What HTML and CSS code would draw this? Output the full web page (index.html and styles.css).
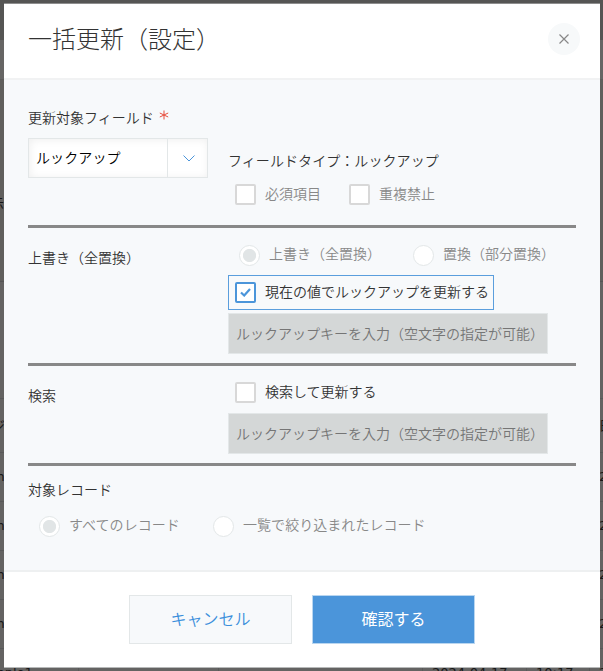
FILE: index.html
```html
<!DOCTYPE html>
<html lang="ja">
<head>
<meta charset="utf-8">
<title>一括更新（設定）</title>
<link rel="stylesheet" href="styles.css">
</head>
<body>
<div class="page">
  <div class="bar bar-top"></div>
  <div class="bar bar-nav"></div>
  <div class="bar bar-tools"><span class="edge-text">示</span></div>
  <div class="bar bar-space"></div>
  <div class="row head"><span class="name">ジ</span><span></span><span></span><span></span><span></span><span>日</span></div>
  <div class="row"><span class="name">m</span><span></span><span></span><span></span><span></span><span>2</span></div>
  <div class="row"><span class="name">m</span><span></span><span></span><span></span><span></span><span>2</span></div>
  <div class="row"><span class="name">m</span><span></span><span></span><span></span><span></span><span>2</span></div>
  <div class="row"><span class="name">m</span><span></span><span></span><span></span><span></span><span>2</span></div>
  <div class="row"><span class="name">mple1</span><span></span><span></span><span>2024-04-17</span><span>10:17</span><span>2</span></div>
</div>

<div class="modal" role="dialog">
  <header class="modal-head">
    <h1>一括更新（設定）</h1>
    <button class="close" aria-label="閉じる"><svg width="10" height="10" viewBox="0 0 10 10"><path d="M.5 .5L9.5 9.5M9.5 .5L.5 9.5"/></svg></button>
  </header>

  <main class="modal-body">
    <section class="section field">
      <div>
        <div class="label">更新対象フィールド<svg class="required" width="10" height="10" viewBox="0 0 10 10"><path d="M5 .5V9.5M.8 3L9.2 7M9.2 3L.8 7"/></svg></div>
        <div class="select"><span>ルックアップ</span><i><svg width="12" height="7" viewBox="0 0 12 7"><path d="M.5 .5L6 6L11.5 .5"/></svg></i></div>
      </div>
      <div class="field-info">
        <div class="type">フィールドタイプ：ルックアップ</div>
        <div class="checks">
          <label class="check muted"><b class="box"></b>必須項目</label>
          <label class="check muted"><b class="box"></b>重複禁止</label>
        </div>
      </div>
    </section>

    <section class="section overwrite">
      <div class="label">上書き（全置換）</div>
      <div>
        <div class="radios">
          <label class="radio"><b class="dot on"></b>上書き（全置換）</label>
          <label class="radio"><b class="dot"></b>置換（部分置換）</label>
        </div>
        <label class="check focus"><b class="box on"><svg width="11" height="9" viewBox="0 0 11 9"><path d="M1 4.5L4.2 7.5L10 1"/></svg></b>現在の値でルックアップを更新する</label>
        <div class="input">ルックアップキーを入力（空文字の指定が可能）</div>
      </div>
    </section>

    <section class="section search">
      <div class="label">検索</div>
      <div>
        <label class="check"><b class="box"></b>検索して更新する</label>
        <div class="input">ルックアップキーを入力（空文字の指定が可能）</div>
      </div>
    </section>

    <section class="records">
      <div class="label">対象レコード</div>
      <div class="radios">
        <label class="radio"><b class="dot on"></b>すべてのレコード</label>
        <label class="radio"><b class="dot"></b>一覧で絞り込まれたレコード</label>
      </div>
    </section>
  </main>

  <footer class="modal-foot">
    <button class="btn">キャンセル</button>
    <button class="btn primary">確認する</button>
  </footer>
</div>
</body>
</html>
```
FILE: styles.css
```css
* { box-sizing: border-box; }

body {
  margin: 0;
  width: 603px;
  height: 671px;
  overflow: hidden;
  font-family: "Noto Sans CJK JP", sans-serif;
  font-size: 14px;
  font-weight: 350;
  line-height: 20px;
  color: #333;
}

h1, button { font: inherit; margin: 0; }
svg { display: block; fill: none; }

/* Dimmed list behind the dialog */
.page {
  height: 671px;
  overflow: hidden;
  background: #646362;
  color: #171717;
  font-family: "DejaVu Sans", "Noto Sans CJK JP", sans-serif;
  font-size: 13px;
  font-weight: 400;
}
.bar-top { height: 40px; background: #555554; }
.bar-nav { height: 40px; background: #666564; border-bottom: 1px solid #5d5c5b; }
.bar-tools { height: 202px; background: #605f5d; border-bottom: 1px solid #555; padding-top: 114px; }
.bar-space { height: 116px; }
.edge-text { display: block; margin-left: -9px; }
.row {
  display: grid;
  grid-template-columns: 79px 140px 204px 104px 63px 40px;
  height: 49px;
  line-height: 48px;
  border-top: 1px solid #595959;
}
.row.head { height: 54px; line-height: 53px; }
.row span { border-right: 1px solid #595959; padding-left: 9px; white-space: nowrap; }
.row .name { padding: 0; text-indent: -8px; }

.modal {
  position: absolute;
  left: 4px;
  top: 3px;
  width: 596px;
  height: 665px;
  display: flex;
  flex-direction: column;
  background: #fff;
  border-top: 1px solid #8e8e8e;
  border-bottom: 1px solid #b7b9b9;
}

.modal-head {
  height: 76px;
  flex: none;
  display: flex;
  justify-content: space-between;
  padding: 19px 20px 0 24px;
  border-bottom: 2px solid #f1f2f3;
}
.modal-head h1 { font-size: 24px; line-height: 30px; font-weight: 300; }
.close {
  width: 32px;
  height: 32px;
  border: 0;
  border-radius: 50%;
  background: #f7f9fa;
  display: grid;
  place-items: center;
  padding: 0;
}
.close svg { stroke: #888; stroke-width: 1.2; }

.modal-body { flex: 1; background: #f7f9fb; padding: 0 24px; }
.section {
  display: grid;
  grid-template-columns: 200px 1fr;
  border-bottom: 3px solid #888;
}
.field { height: 148px; padding-top: 27px; }
.label { display: flex; align-items: center; height: 20px; line-height: 18px; }
.required { margin: -5px 0 0 5px; stroke: #e74c3c; }
.select {
  width: 180px;
  height: 40px;
  margin-top: 11px;
  display: flex;
  align-items: center;
  background: #fff;
  border: 1px solid #e3e7e8;
  box-shadow: inset 1px 1px 8px #efefef;
  color: #000;
}
.select span { flex: 1; padding: 0 0 2px 7px; letter-spacing: .1px; }
.select i {
  width: 40px;
  height: 38px;
  display: grid;
  place-items: center;
  padding-left: 2px;
  border-left: 1px solid #e3e7e8;
}
.select svg { stroke: #4b95da; }
.field-info { padding-top: 43px; }
.type { letter-spacing: .07px; }
.checks { display: flex; gap: 28px; padding: 14px 0 0 7px; }
.check { display: flex; align-items: flex-start; height: 21px; line-height: 18px; }
.muted, .radio { color: #888; }
.box {
  width: 21px;
  height: 21px;
  flex: none;
  margin-right: 9px;
  background: #fff;
  border: 2px solid #d8d8d8;
  border-radius: 2px;
  display: grid;
  place-items: center;
}
.box.on { border-color: #4b95da; }
.box.on svg { stroke: #4b95da; stroke-width: 2.2; }

.overwrite { height: 138px; }
.overwrite .label { margin-top: 19px; }
.overwrite .radios { padding: 17px 0 0 11px; }
.radios { display: flex; }
.radio { display: flex; align-items: flex-start; width: 174px; line-height: 17px; white-space: nowrap; }
.dot {
  width: 21px;
  height: 21px;
  flex: none;
  margin-right: 9px;
  border: 1px solid #e3e7e8;
  border-radius: 50%;
  background: #fff;
}
.dot.on { background: radial-gradient(circle, #e1e5e6 6.2px, #fff 7px); }
.check.focus {
  width: 266px;
  height: 35px;
  margin-top: 9px;
  padding: 6px 0 0 6px;
  border: 1px solid #5a9edd;
}
.input {
  width: 320px;
  height: 41px;
  margin-top: 3px;
  padding-left: 7px;
  line-height: 38px;
  background: #d4d7d7;
  border: 1px solid #e3e7e8;
  color: #757575;
  white-space: nowrap;
}

.search { height: 100px; }
.search .label { margin-top: 19px; }
.search .check { margin: 16px 0 10px 7px; }

.records { padding-top: 13px; }
.records .radios { padding: 17px 0 0 11px; letter-spacing: .05px; }

.modal-foot {
  height: 97px;
  flex: none;
  display: flex;
  justify-content: center;
  gap: 20px;
  padding-top: 23px;
  border-top: 2px solid #eef0f1;
}
.btn {
  width: 163px;
  height: 49px;
  padding: 0 0 3px;
  font-size: 16px;
  background: #f7f9fb;
  border: 1px solid #e3e7e8;
  color: #3b8fdb;
}
.btn.primary { background: #4b95da; border-color: #b9d6f0; color: #fff; font-weight: 400; }
```
